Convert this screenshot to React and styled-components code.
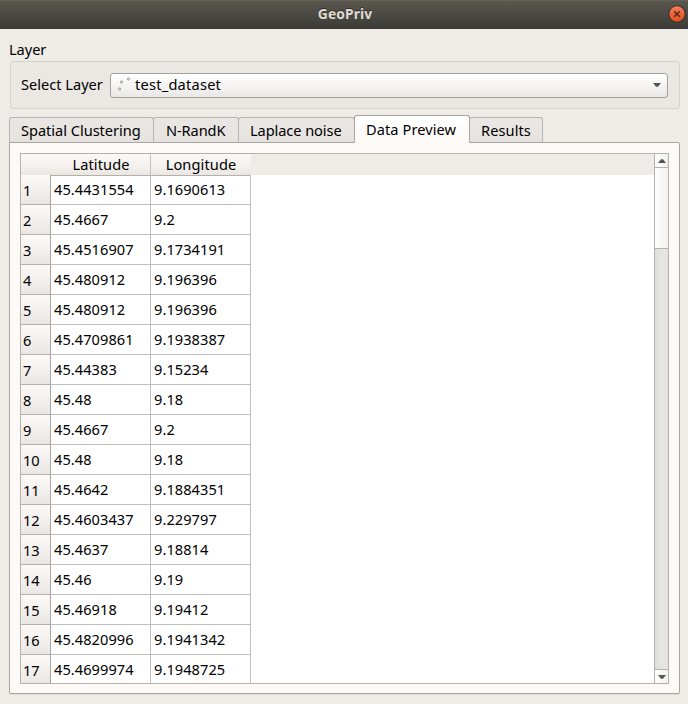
import React from "react";
import styled, { createGlobalStyle } from "styled-components";

const GlobalStyle = createGlobalStyle`
  * { box-sizing: border-box; }
  html, body { margin: 0; padding: 0; background: #efebe7; }
  body {
    font-family: "Noto Sans", "Open Sans", sans-serif;
    font-size: 14.6px;
    line-height: 20px;
    color: #000;
    overflow: hidden;
  }
`;

const Window = styled.main`
  width: 688px;
  height: 704px;
  display: flex;
  flex-direction: column;
  background: #efebe7;
`;

const TitleBar = styled.header`
  height: 29px;
  flex: none;
  display: grid;
  grid-template-columns: 1fr auto 1fr;
  align-items: center;
  padding: 0 2px 0 4px;
  background: linear-gradient(#5a574e, #4b4943 50%, #3d3c37);
  border-top: 1px solid #65625a;
  border-bottom: 1px solid #383733;
`;

const Title = styled.h1`
  grid-column: 2;
  margin: 0 0 2px;
  font-size: 13.8px;
  line-height: 20px;
  font-weight: 700;
  letter-spacing: 0.1px;
  color: #dfdbd2;
  text-shadow: 0 -1px 0 #2e2d29;
`;

const CloseButton = styled.button`
  justify-self: end;
  width: 18px;
  height: 18px;
  margin-bottom: 1px;
  padding: 0;
  border: 0;
  background: none;
  display: flex;
`;

const Content = styled.div`
  flex: 1;
  min-height: 0;
  display: flex;
  flex-direction: column;
  padding: 10px 8px 10px 9px;
`;

const GroupTitle = styled.span`
  letter-spacing: -0.05px;
`;

const GroupBox = styled.section`
  margin: 2px 0 0 1px;
  height: 48px;
  flex: none;
  display: flex;
  align-items: center;
  padding: 0 11px 0 10px;
  border: 1px solid #d6d2ce;
  border-radius: 3px;
  background: #ebe7e3;
`;

const FieldLabel = styled.label`
  width: 89px;
  padding-bottom: 2px;
  letter-spacing: 0;
  white-space: nowrap;
`;

const Select = styled.div`
  flex: 1;
  height: 25px;
  display: flex;
  align-items: center;
  padding: 0 6px 0 6px;
  border: 1px solid #a5a19e;
  border-radius: 3px;
  background: linear-gradient(#ffffff, #f5f4f3 50%, #eae8e7);
`;

const SelectValue = styled.span`
  flex: 1;
  padding: 0 0 2px 4px;
  letter-spacing: 0.23px;
`;

const TabBar = styled.nav`
  height: 28px;
  flex: none;
  display: flex;
  align-items: flex-end;
  margin: 6px 0 -1px;
  z-index: 1;
`;

const Tab = styled.div`
  width: ${(p) => p.$width}px;
  height: ${(p) => (p.$active ? 28 : 26)}px;
  padding: ${(p) => (p.$active ? 3 : 2)}px 0 0 ${(p) => p.$inset || 11}px;
  margin-right: -1px;
  letter-spacing: ${(p) => p.$track}px;
  white-space: nowrap;
  z-index: ${(p) => (p.$active ? 1 : 0)};
  border: 1px solid;
  border-color: ${(p) => (p.$active ? "#a9a5a2" : "#b8b4b1")};
  border-bottom-color: ${(p) => (p.$active ? "#fdf9f6" : "#a9a5a2")};
  border-radius: 3px 3px 0 0;
  background: ${(p) =>
    p.$active
      ? "linear-gradient(#ffffff, #fdf9f6)"
      : "linear-gradient(#eae6e3, #e8e4e1 80%, #e4e0dd)"};
`;

const Pane = styled.section`
  flex: 1;
  min-height: 0;
  display: flex;
  padding: 10px 10px 9px;
  border: 1px solid #a9a5a2;
  border-radius: 0 2px 2px 2px;
  background: #fdf9f6;
  box-shadow: 0 1px 0 #e1ddd9;
`;

const TableFrame = styled.div`
  flex: 1;
  display: flex;
  min-width: 0;
  border: 1px solid #b4b2ae;
  background: #fff;
`;

const TableView = styled.div`
  flex: 1;
  overflow: hidden;
`;

const HeaderRow = styled.div`
  height: 21px;
  display: grid;
  grid-template-columns: 30px 100px 100px 1fr;
  background: #efebe7;
`;

const HeaderCell = styled.div`
  padding-left: 1px;
  border-bottom: 1px solid #b4b0ac;
  border-right: 1px solid ${(p) => (p.$divider ? "#c6c2be" : "transparent")};
  background: linear-gradient(#fbf8f5, #f5f2ef 50%, #eae7e3);
  text-align: center;
  line-height: 21px;
  letter-spacing: 0.1px;
`;

const Row = styled.div`
  height: 30px;
  display: grid;
  grid-template-columns: 30px 100px 100px;
`;

const RowNumber = styled.div`
  padding: 5px 0 0 2px;
  border-right: 1px solid #a9a5a2;
  border-bottom: 1px solid #b4b0ac;
  background: linear-gradient(#fcf9f6, #f3f0ed 50%, #e9e6e3);
  line-height: 20px;
`;

const Cell = styled.div`
  padding: 4px 0 0 3px;
  border-right: 1px solid #c0bfbd;
  border-bottom: 1px solid #c0bfbd;
  line-height: 20px;
  letter-spacing: 0.06px;
`;

const ScrollBar = styled.div`
  width: 14px;
  display: flex;
  flex-direction: column;
  border-left: 1px solid #b4b2ae;
  background: linear-gradient(90deg, #dededa, #e5e5e1 50%, #e3e3df);
`;

const ScrollButton = styled.div`
  height: 14px;
  flex: none;
  display: flex;
  align-items: center;
  justify-content: center;
  border-bottom: ${(p) => (p.$down ? 0 : "1px solid #b4b2ae")};
  border-top: ${(p) => (p.$down ? "1px solid #b4b2ae" : 0)};
  margin-top: ${(p) => (p.$down ? "auto" : 0)};
  background: linear-gradient(90deg, #ffffff, #f0f0ed);
`;

const ScrollThumb = styled.div`
  height: 81px;
  border-bottom: 1px solid #b4b2ae;
  background: linear-gradient(90deg, #ffffff, #f0f0ed);
`;

const CloseIcon = () => (
  <svg width="18" height="18" viewBox="0 0 18 18">
    <defs>
      <linearGradient id="close" x1="0" y1="0" x2="0" y2="1">
        <stop offset="0" stopColor="#f58562" />
        <stop offset="0.5" stopColor="#ee6139" />
        <stop offset="1" stopColor="#e34f1d" />
      </linearGradient>
    </defs>
    <circle cx="9" cy="9" r="8.2" fill="url(#close)" stroke="#35332e" strokeWidth="1.1" />
    <path d="M6.2 6.2 11.8 11.8M11.8 6.2 6.2 11.8" stroke="#4b2819" strokeWidth="1.4" />
  </svg>
);

const PointsIcon = () => (
  <svg width="14" height="16" viewBox="0 0 14 16" fill="#f4f4f4" stroke="#858585" strokeWidth="0.8">
    <circle cx="2.5" cy="12" r="1.1" />
    <circle cx="4.5" cy="5" r="1.1" />
    <circle cx="11.5" cy="2" r="1.1" />
  </svg>
);

const Arrow = ({ up }) => (
  <svg width="8" height="4" viewBox="0 0 8 4" fill="#555553">
    <path d={up ? "M0 4 3 0.3H5L8 4Z" : "M0 0H8L5 3.7H3Z"} />
  </svg>
);

const tabs = [
  { name: "Spatial Clustering", width: 145, track: -0.03 },
  { name: "N-RandK", width: 86, track: -0.1, inset: 12 },
  { name: "Laplace noise", width: 117, track: -0.08 },
  { name: "Data Preview", width: 116, track: 0.08, active: true },
  { name: "Results", width: 74, track: 0.08 },
];

const points = [
  ["45.4431554", "9.1690613"],
  ["45.4667", "9.2"],
  ["45.4516907", "9.1734191"],
  ["45.480912", "9.196396"],
  ["45.480912", "9.196396"],
  ["45.4709861", "9.1938387"],
  ["45.44383", "9.15234"],
  ["45.48", "9.18"],
  ["45.4667", "9.2"],
  ["45.48", "9.18"],
  ["45.4642", "9.1884351"],
  ["45.4603437", "9.229797"],
  ["45.4637", "9.18814"],
  ["45.46", "9.19"],
  ["45.46918", "9.19412"],
  ["45.4820996", "9.1941342"],
  ["45.4699974", "9.1948725"],
];

export default function App() {
  return (
    <>
      <GlobalStyle />
      <Window>
        <TitleBar>
          <Title>GeoPriv</Title>
          <CloseButton aria-label="Close">
            <CloseIcon />
          </CloseButton>
        </TitleBar>
        <Content>
          <GroupTitle>Layer</GroupTitle>
          <GroupBox>
            <FieldLabel>Select Layer</FieldLabel>
            <Select>
              <PointsIcon />
              <SelectValue>test_dataset</SelectValue>
              <Arrow />
            </Select>
          </GroupBox>
          <TabBar>
            {tabs.map((t) => (
              <Tab key={t.name} $width={t.width} $active={t.active} $track={t.track} $inset={t.inset}>
                {t.name}
              </Tab>
            ))}
          </TabBar>
          <Pane>
            <TableFrame>
              <TableView>
                <HeaderRow>
                  <HeaderCell />
                  <HeaderCell $divider>Latitude</HeaderCell>
                  <HeaderCell>Longitude</HeaderCell>
                </HeaderRow>
                {points.map(([lat, lon], i) => (
                  <Row key={i}>
                    <RowNumber>{i + 1}</RowNumber>
                    <Cell>{lat}</Cell>
                    <Cell>{lon}</Cell>
                  </Row>
                ))}
              </TableView>
              <ScrollBar>
                <ScrollButton>
                  <Arrow up />
                </ScrollButton>
                <ScrollThumb />
                <ScrollButton $down>
                  <Arrow />
                </ScrollButton>
              </ScrollBar>
            </TableFrame>
          </Pane>
        </Content>
      </Window>
    </>
  );
}
